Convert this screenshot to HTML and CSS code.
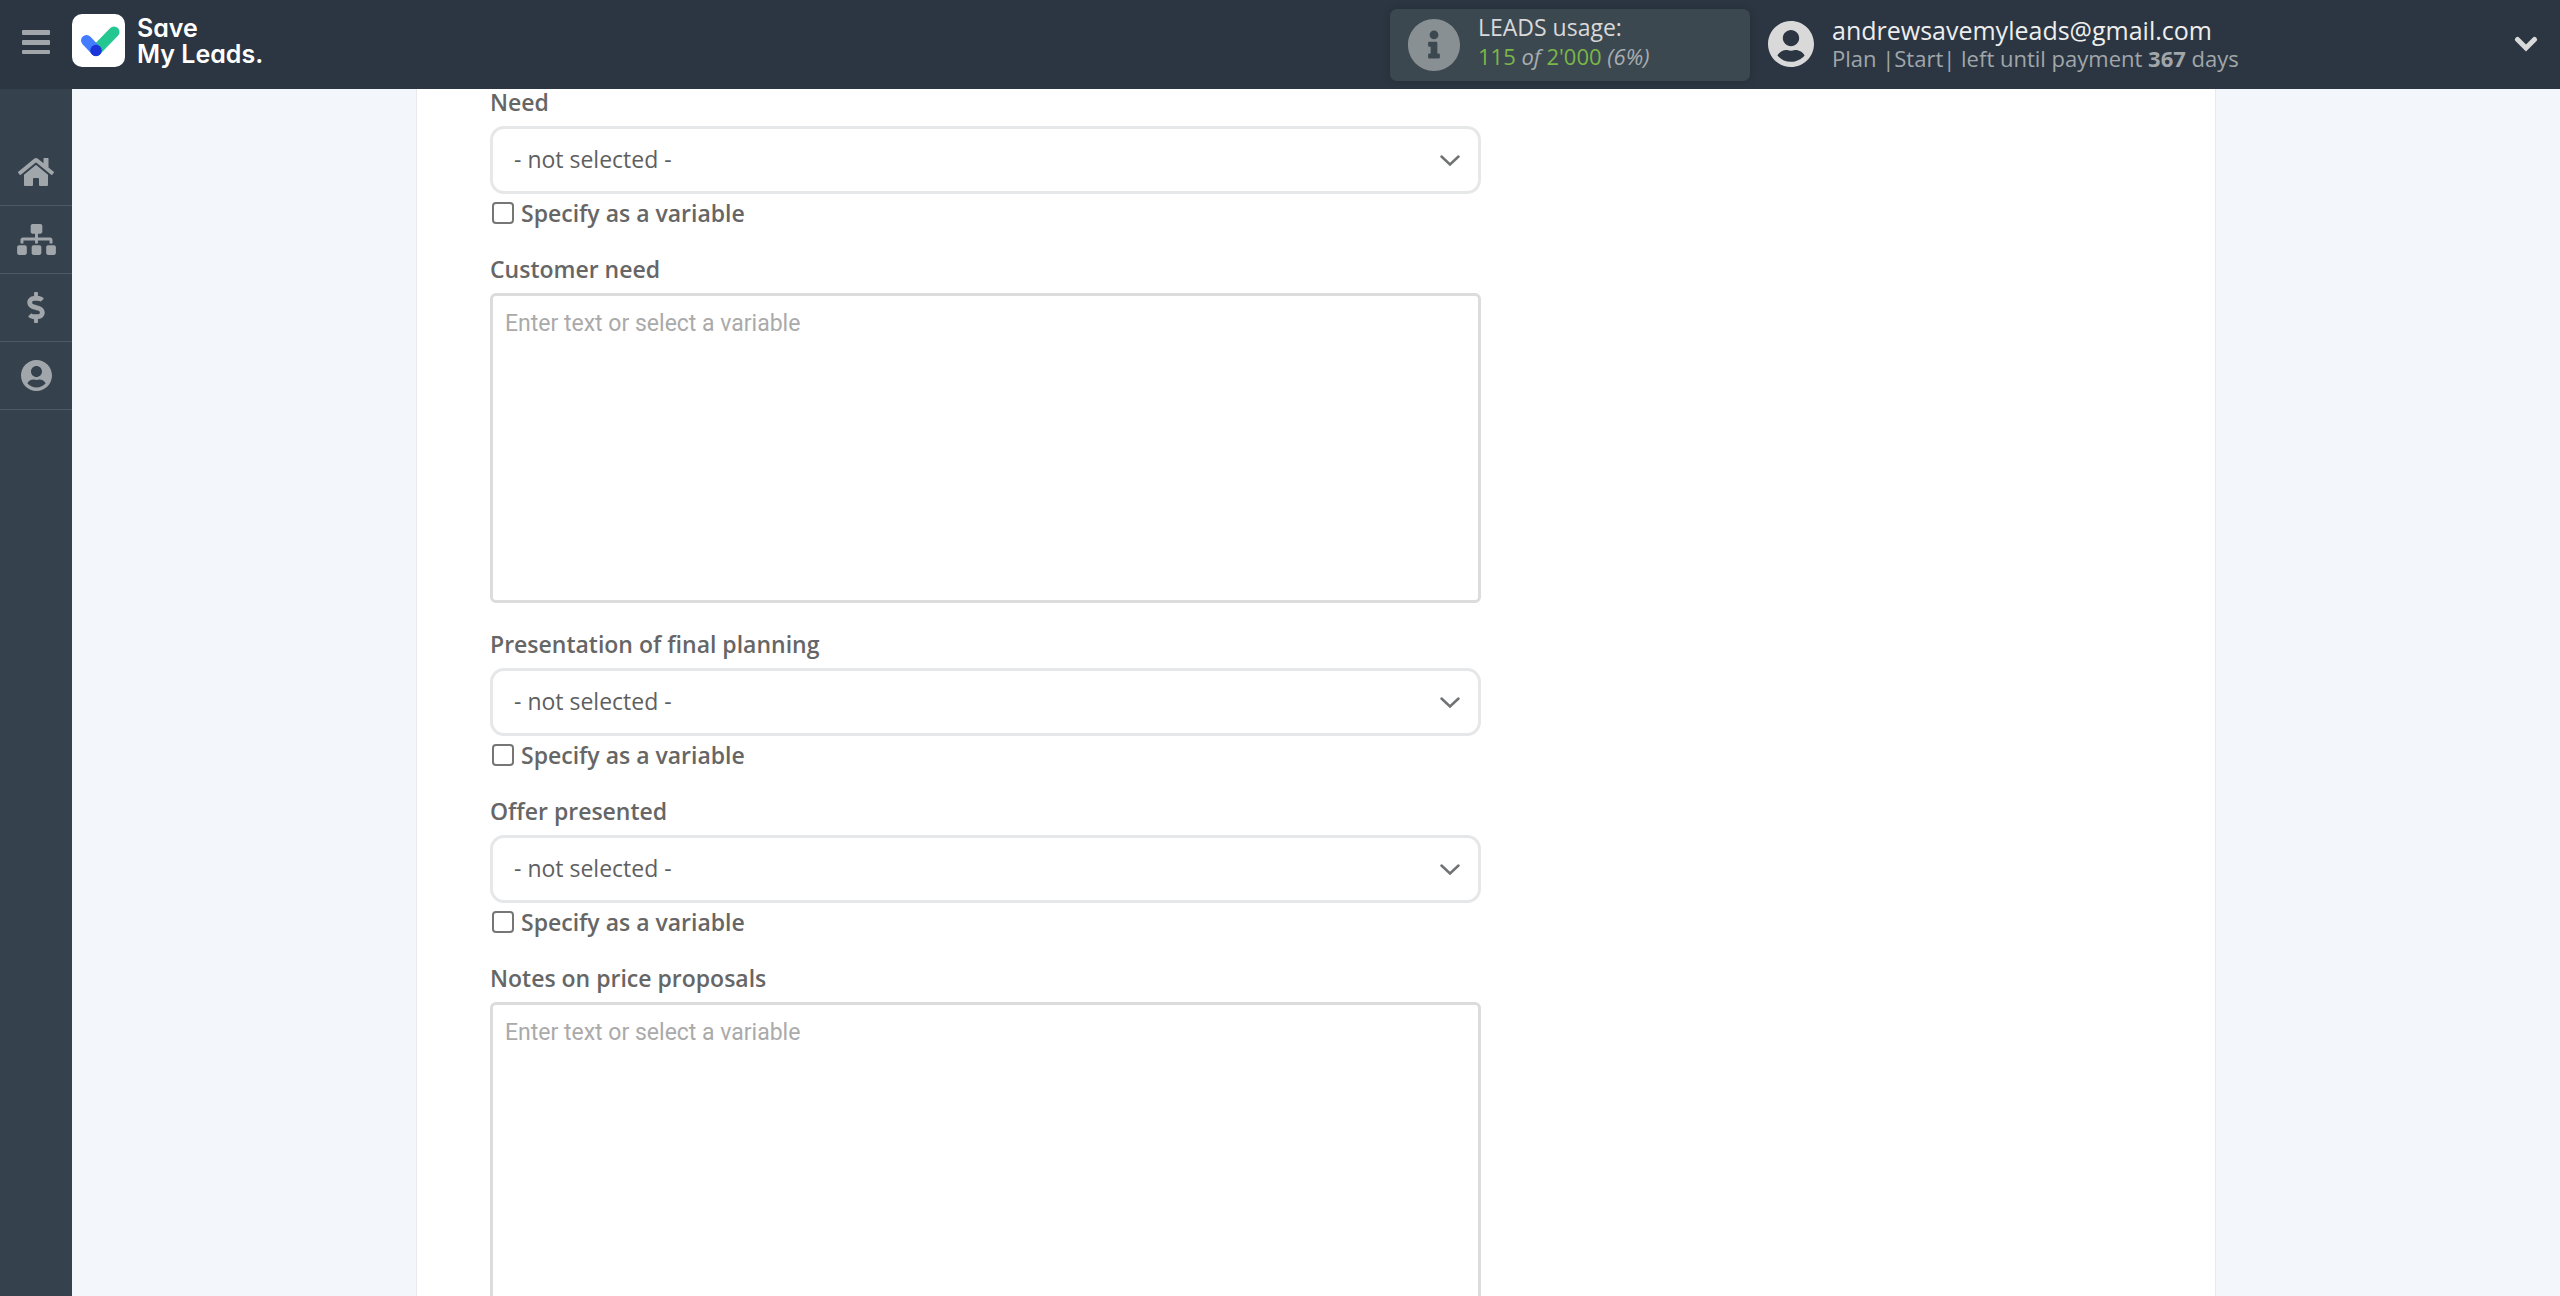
FILE: index.html
```html
<!DOCTYPE html>
<html lang="en">
<head>
    <meta charset="UTF-8">
    <meta name="viewport" content="width=device-width, initial-scale=1.0">
    <title>Save My Leads</title>
    <link rel="stylesheet" href="styles.css">
</head>
<body>
    <header class="topbar">
        <button class="menu-toggle" type="button" aria-label="Toggle menu">
            <svg viewBox="0 0 28 25"><rect width="28" height="5" rx="1"/><rect y="10" width="28" height="5" rx="1"/><rect y="20" width="28" height="4" rx="1"/></svg>
        </button>
        <a class="logo" href="/">
            <svg class="logo-mark" viewBox="0 0 53 53">
                <rect width="53" height="53" rx="10" fill="#fff"/>
                <g fill="none" stroke-width="11" stroke-linecap="round">
                    <path d="M24 36.500L42 18" stroke="#25c790"/>
                    <path d="M14.500 26.500L24 36.500" stroke="#437cff"/>
                </g>
                <circle cx="24" cy="36.500" r="5.700" fill="#1c35d8"/>
            </svg>
            <span class="logo-text">Save<br>My Leads.</span>
        </a>

        <div class="usage">
            <svg class="usage-icon" viewBox="8 8 496 496"><path d="M256 8C119.043 8 8 119.083 8 256c0 136.997 111.043 248 248 248s248-111.003 248-248C504 119.083 392.957 8 256 8zm0 110c23.196 0 42 18.804 42 42s-18.804 42-42 42-42-18.804-42-42 18.804-42 42-42zm56 254c0 6.627-5.373 12-12 12h-88c-6.627 0-12-5.373-12-12v-24c0-6.627 5.373-12 12-12h12v-64h-12c-6.627 0-12-5.373-12-12v-24c0-6.627 5.373-12 12-12h64c6.627 0 12 5.373 12 12v100h12c6.627 0 12 5.373 12 12v24z"/></svg>
            <div class="usage-info">
                <div class="usage-title">LEADS usage:</div>
                <div class="usage-count"><b>115</b> <i>of</i> <b>2'000</b> <i>(6%)</i></div>
            </div>
        </div>

        <div class="account">
            <svg class="account-icon" viewBox="0 8 496 496"><path d="M248 8C111 8 0 119 0 256s111 248 248 248 248-111 248-248S385 8 248 8zm0 96c48.600 0 88 39.400 88 88s-39.400 88-88 88-88-39.400-88-88 39.400-88 88-88zm0 344c-58.700 0-111.300-26.600-146.500-68.200 18.800-35.400 55.600-59.800 98.500-59.800 2.400 0 4.800.4 7.100 1.100 13 4.200 26.600 6.900 40.900 6.900 14.300 0 28-2.700 40.900-6.900 2.300-.7 4.700-1.100 7.100-1.100 42.900 0 79.700 24.400 98.500 59.800C359.300 421.400 306.700 448 248 448z"/></svg>
            <div class="account-info">
                <div class="account-email">andrewsavemyleads@gmail.com</div>
                <div class="account-plan">Plan |Start| left until payment <strong>367</strong> days</div>
            </div>
            <button class="account-toggle" type="button" aria-label="Account menu">
                <svg viewBox="0 0 24 16"><path d="M3.500 3.500L12 12l8.500-8.500" fill="none" stroke="#d9d9d9" stroke-width="5" stroke-linecap="round"/></svg>
            </button>
        </div>
    </header>

    <div class="layout">
        <nav class="sidebar">
            <a href="#home" aria-label="Home">
                <svg width="36" height="32" viewBox="0 0 576 512"><path d="M280.370 148.260L96 300.110V464a16 16 0 0 0 16 16l112.060-.29a16 16 0 0 0 15.920-16V368a16 16 0 0 1 16-16h64a16 16 0 0 1 16 16v95.640a16 16 0 0 0 16 16.050L464 480a16 16 0 0 0 16-16V300L295.670 148.260a12.190 12.190 0 0 0-15.300 0zM571.600 251.470L488 182.560V44.050a12 12 0 0 0-12-12h-56a12 12 0 0 0-12 12v72.610L318.470 43a48 48 0 0 0-61 0L4.340 251.470a12 12 0 0 0-1.600 16.900l25.500 31A12 12 0 0 0 45.150 301l235.220-193.740a12.190 12.190 0 0 1 15.300 0L530.900 301a12 12 0 0 0 16.900-1.600l25.500-31a12 12 0 0 0-1.700-16.930z"/></svg>
            </a>
            <a href="#connections" aria-label="Connections">
                <svg width="39" height="31" viewBox="0 0 640 512"><path d="M128 352H32c-17.670 0-32 14.330-32 32v96c0 17.670 14.330 32 32 32h96c17.670 0 32-14.330 32-32v-96c0-17.670-14.330-32-32-32zm-24-80h192v48h48v-48h192v48h48v-57.590c0-21.170-17.230-38.410-38.410-38.410H344v-64h40c17.670 0 32-14.330 32-32V32c0-17.670-14.330-32-32-32H256c-17.670 0-32 14.330-32 32v96c0 17.670 14.330 32 32 32h40v64H94.410C73.230 224 56 241.230 56 262.410V320h48v-48zm264 80h-96c-17.670 0-32 14.330-32 32v96c0 17.670 14.330 32 32 32h96c17.670 0 32-14.330 32-32v-96c0-17.670-14.330-32-32-32zm240 0h-96c-17.670 0-32 14.330-32 32v96c0 17.670 14.330 32 32 32h96c17.670 0 32-14.330 32-32v-96c0-17.670-14.330-32-32-32z"/></svg>
            </a>
            <a href="#billing" aria-label="Billing">
                <svg width="18" height="31" viewBox="0 0 288 512"><path d="M209.200 233.400l-108-31.600C88.700 198.200 80 186.500 80 173.500c0-16.300 13.200-29.500 29.500-29.500h66.300c12.200 0 24.200 3.700 34.200 10.500 6.100 4.100 14.300 3.100 19.500-2l34.800-34c7.100-6.900 6.100-18.400-1.800-24.500C238 74.800 207.400 64.100 176 64V16c0-8.800-7.200-16-16-16h-32c-8.800 0-16 7.200-16 16v48h-2.500C45.800 64-5.400 118.700.5 183.600c4.200 46.100 39.400 83.600 83.800 96.600l102.500 30c12.500 3.700 21.200 15.300 21.200 28.300 0 16.300-13.200 29.500-29.500 29.500h-66.300C100 368 88 364.300 78 357.500c-6.100-4.100-14.300-3.100-19.500 2l-34.800 34c-7.100 6.900-6.100 18.400 1.800 24.500 24.500 19.200 55.100 29.900 86.500 30v48c0 8.800 7.200 16 16 16h32c8.800 0 16-7.200 16-16v-48.200c46.600-.9 90.300-28.600 105.700-72.700 21.500-61.600-14.600-124.800-72.500-141.700z"/></svg>
            </a>
            <a href="#profile" aria-label="Profile">
                <svg width="31" height="31" viewBox="0 8 496 496"><path d="M248 8C111 8 0 119 0 256s111 248 248 248 248-111 248-248S385 8 248 8zm0 96c48.600 0 88 39.400 88 88s-39.400 88-88 88-88-39.400-88-88 39.400-88 88-88zm0 344c-58.700 0-111.300-26.600-146.500-68.200 18.800-35.400 55.600-59.800 98.500-59.800 2.400 0 4.800.4 7.100 1.100 13 4.200 26.600 6.900 40.900 6.900 14.300 0 28-2.700 40.900-6.900 2.300-.7 4.700-1.100 7.100-1.100 42.900 0 79.700 24.400 98.500 59.800C359.300 421.400 306.700 448 248 448z"/></svg>
            </a>
        </nav>

        <main class="content">
            <form class="panel">
                <div class="field">
                    <label class="field-label" for="need">Need</label>
                    <select class="field-select" id="need"><option>- not selected -</option></select>
                    <label class="field-check"><input type="checkbox"> Specify as a variable</label>
                </div>
                <div class="field">
                    <label class="field-label" for="customer-need">Customer need</label>
                    <textarea class="field-text" id="customer-need" placeholder="Enter text or select a variable"></textarea>
                </div>
                <div class="field">
                    <label class="field-label" for="presentation">Presentation of final planning</label>
                    <select class="field-select" id="presentation"><option>- not selected -</option></select>
                    <label class="field-check"><input type="checkbox"> Specify as a variable</label>
                </div>
                <div class="field">
                    <label class="field-label" for="offer">Offer presented</label>
                    <select class="field-select" id="offer"><option>- not selected -</option></select>
                    <label class="field-check"><input type="checkbox"> Specify as a variable</label>
                </div>
                <div class="field">
                    <label class="field-label" for="notes">Notes on price proposals</label>
                    <textarea class="field-text" id="notes" placeholder="Enter text or select a variable"></textarea>
                </div>
            </form>
        </main>
    </div>
</body>
</html>
```
FILE: styles.css
```css
:root {
    --topbar-color: #2b3642;
    --sidebar-color: #36414e;
    --icon-color: #a1a6aa;
    --page-color: #f3f7fc;
    --text-color: #666666;
    --green-color: #7ab648;
}

* {
    box-sizing: border-box;
}

body {
    margin: 0;
    height: 100vh;
    display: flex;
    flex-direction: column;
    overflow: hidden;
    background: var(--page-color);
    color: var(--text-color);
    font-family: "Open Sans", "Noto Sans", sans-serif;
    font-size: 23px;
}

svg {
    display: block;
}

button {
    padding: 0;
    border: 0;
    background: none;
    cursor: pointer;
}

/* Top bar */
.topbar {
    flex: none;
    height: 89px;
    display: flex;
    align-items: center;
    background: var(--topbar-color);
}

.menu-toggle {
    width: 72px;
    display: flex;
    justify-content: center;
    padding-bottom: 4px;
}

.menu-toggle svg {
    width: 28px;
    fill: var(--icon-color);
}

.logo {
    display: flex;
    align-items: center;
    gap: 12px;
    padding-bottom: 8px;
    color: #fff;
    text-decoration: none;
}

.logo-mark {
    width: 53px;
}

.logo-text {
    font-family: Inter, sans-serif;
    font-size: 25px;
    font-weight: 600;
    font-feature-settings: "cv11";
    line-height: 26px;
}

.usage {
    display: flex;
    align-items: center;
    gap: 18px;
    width: 360px;
    height: 72px;
    margin-left: auto;
    padding: 0 18px;
    border-radius: 7px;
    background: #3c4850;
    box-shadow: 0 0 8px rgba(0, 0, 0, 0.15);
    white-space: nowrap;
}

.usage-icon {
    width: 52px;
    fill: #899093;
}

.usage-info {
    padding-bottom: 6px;
    line-height: 29px;
}

.usage-title {
    color: #d9d9d9;
}

.usage-count {
    color: #a8adb0;
    font-size: 22px;
}

.usage-count b {
    color: var(--green-color);
    font-weight: 400;
}

.account {
    display: flex;
    align-items: center;
    gap: 18px;
    width: 810px;
    padding: 0 22px 2px 18px;
    white-space: nowrap;
}

.account-icon {
    width: 46px;
    fill: #d9d9d9;
}

.account-info {
    flex: 1;
    line-height: 28px;
}

.account-email {
    color: #eeeeee;
    font-size: 25px;
}

.account-plan {
    color: #a1a6aa;
    font-size: 22px;
}

.account-toggle svg {
    width: 24px;
}

/* Left menu */
.layout {
    flex: 1;
    min-height: 0;
    display: flex;
}

.sidebar {
    flex: none;
    width: 72px;
    padding-top: 49px;
    background: var(--sidebar-color);
}

.sidebar a {
    display: flex;
    align-items: center;
    justify-content: center;
    height: 68px;
    border-bottom: 1px solid #4d5864;
}

.sidebar svg {
    fill: var(--icon-color);
}

/* Form */
.content {
    flex: 1;
    overflow-y: auto;
    scrollbar-width: none;
}

.panel {
    max-width: 1800px;
    margin: 0 auto;
    padding: 0 73px;
    border: 1px solid #e8eaed;
    border-width: 0 1px;
    background: #fff;
}

.field {
    display: flex;
    flex-direction: column;
    align-items: flex-start;
    width: 60%;
    padding-bottom: 28px;
}

.field-label,
.field-check {
    font-weight: 600;
}

.field-label {
    margin-bottom: 11px;
    line-height: 26px;
}

.field-select {
    appearance: none;
    width: 100%;
    height: 68px;
    padding: 0 60px 2px 21px;
    border: 3px solid #e6e7e8;
    border-radius: 14px;
    background: #fff url("data:image/svg+xml,%3Csvg xmlns='http://www.w3.org/2000/svg' width='20' height='12' viewBox='0 0 20 12'%3E%3Cpath d='M1.500 1.500L10 9.500l8.500-8' fill='none' stroke='%23707274' stroke-width='2.500' stroke-linecap='round'/%3E%3C/svg%3E") no-repeat right 18px top 26px;
    color: #5f5f5f;
    font: inherit;
}

.field-check {
    display: flex;
    align-items: center;
    gap: 7px;
    margin-top: 4px;
    line-height: 30px;
}

.field-check input {
    appearance: none;
    width: 22px;
    height: 22px;
    margin: 0 0 0 2px;
    border: 2px solid #767676;
    border-radius: 4px;
    background: #fff;
}

.field-check input:checked {
    background: #767676;
}

.field-text {
    width: 100%;
    height: 310px;
    padding: 13px 12px;
    border: 3px solid #dcdcdc;
    border-radius: 6px;
    color: var(--text-color);
    font-family: Roboto, sans-serif;
    font-size: 23px;
    line-height: 30px;
    resize: none;
}

.field-text::placeholder {
    color: #aaaaaa;
}
```
